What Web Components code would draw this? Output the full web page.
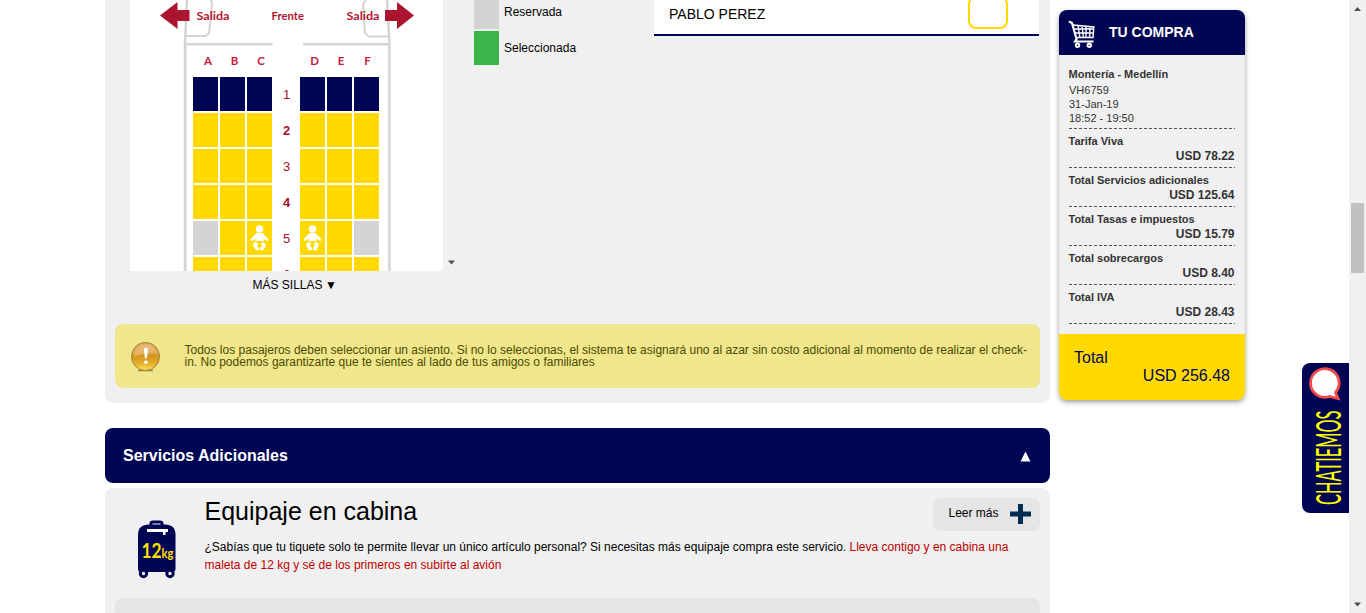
<!DOCTYPE html>
<html lang="es">
<head>
<meta charset="utf-8">
<title>Selección de sillas</title>
<style>
html,body{margin:0;height:613px;overflow:hidden;background:#fff}
body{font:12px "Liberation Sans",Arial,sans-serif;color:#000}
</style>
</head>
<body>
<booking-page></booking-page>
<script>
const define = (name, html, setup) => customElements.define(name, class extends HTMLElement {
  constructor() { super(); this.attachShadow({mode: 'open'}); }
  connectedCallback() {
    const t = document.createElement('template');
    t.innerHTML = typeof html === 'function' ? html(this) : html;
    this.shadowRoot.replaceChildren(t.content.cloneNode(true));
    if (setup) setup(this);
  }
});

define('baby-icon', `<style>:host{display:block;width:19px;height:26px}svg{display:block}</style>
<svg width="19" height="26" viewBox="0 0 19 26" fill="#fff"><circle cx="9.500" cy="3.900" r="3.700"/>
<path d="M6.500 8H12.500L18 13.700Q18.900 15.200 17.400 15.900L15.800 15.600L13.600 13.600V16H5.400V13.600L3.200 15.600L1.600 15.900Q.1 15.200 1 13.700Z"/>
<path d="M5.600 16.800L8.600 19L7 20.700L9 23Q9.500 25.400 7.400 25.600Q5.500 25.400 4.800 23.600L3 20.600Q2.900 18 5.600 16.800ZM13.400 16.800L10.400 19L12 20.700L10 23Q9.500 25.400 11.600 25.600Q13.500 25.400 14.200 23.600L16 20.600Q16.100 18 13.400 16.800Z"/></svg>`);

define('seat-cell', `<style>:host{display:flex;box-sizing:border-box;height:34px;background:#ffd900;padding:4px 0 0 3px;overflow:hidden}
:host([kind=n]){background:#000653}:host([kind=g]){background:#d4d4d4}</style><slot></slot>`);

define('seat-row', h => {
  const c = k => `<seat-cell kind="${k}">${k === 'b' ? '<baby-icon></baby-icon>' : ''}</seat-cell>`;
  const s = [...h.getAttribute('seats')];
  return `<style>:host{display:grid;grid-template-columns:25px 25px 25px 24px 25px 25px 25px;column-gap:2px;height:34px}
  b{font:13px/35px "Liberation Sans",sans-serif;color:#a50f2d;text-align:center;padding-left:1px}
  :host([strong]) b{font-weight:bold}</style>${s.slice(0,3).map(c).join('')}<b>${h.getAttribute('num')}</b>${s.slice(3).map(c).join('')}`;
});

define('seat-map', `<style>
:host{display:block;width:313px;height:271px;background:#fff;overflow:hidden;position:relative}
svg{position:absolute;left:0;top:0}
.rows{display:grid;row-gap:2px;padding:77px 0 0 63px}
</style>
<svg width="313" height="271" viewBox="0 0 313 271" font-family="Lato,sans-serif" font-weight="700" font-size="11.500" fill="#b3152f">
<g fill="none" stroke="#d3d3d3">
<path d="M57 0L55 44V271" stroke-width="2.500"/><path d="M257 0L259.500 44V271" stroke-width="2.500"/>
<path d="M56.500 46V271M258 46V271" stroke="#e9e9e9" stroke-width="1"/>
<path d="M56 44.300H142.500M173 44.300H260" stroke-width="2.500"/>
<path d="M81 0L82 4L79 33L75.500 36H57M236 0L233 4L235 33L239 36.500H258" stroke-width="2"/></g>
<path d="M30 15.500L47.500 2V10H59.500V21H47.500V29ZM284 15.500L267 2V10H255V21H267V29Z" fill="#ab152f"/>
<text x="66.500" y="19.500" textLength="33" lengthAdjust="spacingAndGlyphs">Salida</text><text x="141.500" y="19.500" textLength="32.500" lengthAdjust="spacingAndGlyphs">Frente</text><text x="216.500" y="19.500" textLength="33" lengthAdjust="spacingAndGlyphs">Salida</text>
<g text-anchor="middle" fill="#c51c3b"><text x="78" y="65">A</text><text x="104.500" y="65">B</text><text x="131" y="65">C</text><text x="184.500" y="65">D</text><text x="211" y="65">E</text><text x="237.500" y="65">F</text></g>
</svg>
<div class="rows">
<seat-row num="1" seats="nnnnnn"></seat-row><seat-row num="2" strong seats="yyyyyy"></seat-row><seat-row num="3" seats="yyyyyy"></seat-row><seat-row num="4" strong seats="yyyyyy"></seat-row><seat-row num="5" seats="gybbyg"></seat-row><seat-row num="6" seats="yyyyyy"></seat-row></div>`);

define('legend-item', `<style>:host{display:flex;gap:5px;height:34px;line-height:34px}
i{width:25px;background:var(--swatch)}</style><i></i><span><slot></slot></span>`);

define('passenger-row', `<style>:host{display:flex;justify-content:space-between;box-sizing:border-box;width:385px;height:36px;background:#fff;border-bottom:2px solid #000653;padding:0 31px 0 15px;font-size:14px;line-height:29px}
i{box-sizing:border-box;width:40px;height:33px;margin-top:-4px;border:2px solid #ffd900;border-radius:8px}</style><span><slot></slot></span><i></i>`);

define('alert-box', `<style>:host{display:flex;box-sizing:border-box;height:64px;margin:0 10px;border-radius:8px;background:#f0e68c;color:#4b4b00;padding:17px 0 0 15px;line-height:12px}
svg{display:block;margin-right:23.500px}p{margin:3px 0 0;white-space:nowrap}</style>
<svg width="31" height="31" viewBox="0 0 31 31"><defs><linearGradient id="g" x2="0" y2="1"><stop offset="0" stop-color="#e3ad64"/><stop offset=".42" stop-color="#dda23e"/><stop offset=".46" stop-color="#d4931c"/><stop offset=".75" stop-color="#e3ae2c"/><stop offset="1" stop-color="#ffe252"/></linearGradient></defs>
<path d="M8 29.500H23" stroke="#8d8344" stroke-width="1.500"/><circle cx="15.500" cy="15.500" r="14" fill="url(#g)" stroke="#a28436"/><path d="M4 12A12 12 0 0 1 27 12Q15 11 4 16Z" fill="#fff" opacity=".18"/><path d="M15.900 6.500C18.700 6.500 18 10.500 16.700 17.500H15.100C13.800 10.500 13.100 6.500 15.900 6.500Z" fill="#fff"/><ellipse cx="15.900" cy="21.300" rx="2" ry="1.800" fill="#fff"/></svg><p><slot></slot></p>`);

define('seat-section', `<style>
:host{display:flex;flex-direction:column;height:403px;background:#f0f0f0;border-radius:0 0 8px 8px}
.top{display:flex;height:271px;padding-left:25px}
.arrow{align-self:flex-end;margin:0 0 6px 4px;width:9px;height:5px}
.legend{display:grid;row-gap:2px;align-content:start;width:180px;margin:-5px 0 0 18px}
.more{height:26px;line-height:28px;padding-left:147.500px}
.more span{margin-left:-1px}
alert-box{margin-top:27px}
</style>
<div class="top"><seat-map></seat-map><svg class="arrow" viewBox="0 0 9 5"><path d="M1 .5H8L4.500 4.500Z" fill="#4f4f4f"/></svg>
<div class="legend"><legend-item style="--swatch:#d4d4d4">Reservada</legend-item><legend-item style="--swatch:#3ab54a">Seleccionada</legend-item></div>
<passenger-row>PABLO PEREZ</passenger-row></div>
<div class="more">MÁS SILLAS <span>▼</span></div>
<alert-box>Todos los pasajeros deben seleccionar un asiento. Si no lo seleccionas, el sistema te asignará uno al azar sin costo adicional al momento de realizar el check-<br>in. No podemos garantizarte que te sientes al lado de tus amigos o familiares</alert-box>`);

define('section-header', `<style>:host{display:flex;justify-content:space-between;align-items:center;box-sizing:border-box;height:55px;background:#000653;color:#fff;border-radius:8px;padding:0 19px 0 18px;font:bold 16px "Liberation Sans",sans-serif}
svg{display:block;margin-top:2px}</style><span><slot></slot></span><svg width="11" height="11" viewBox="0 0 11 11"><path d="M5.500 .5L10.500 10.500H.5Z" fill="#fff"/></svg>`);

define('luggage-icon', `<style>:host{display:block;width:40px;height:60px}svg{display:block}</style>
<svg width="40" height="60" viewBox="0 0 40 60"><path d="M14 5V3.500Q14 2 16 2H23Q25 2 25 3.500V5" fill="none" stroke="#000653" stroke-width="3"/><path d="M1 15Q1 4.500 12 4.500H28Q38.500 4.500 38.500 15V49Q38.500 52 35.500 52H4Q1 52 1 49Z" fill="#000653"/>
<circle cx="6.500" cy="53.500" r="3.200" fill="#fff" stroke="#000653" stroke-width="3"/><circle cx="33" cy="53.500" r="3.200" fill="#fff" stroke="#000653" stroke-width="3"/><path d="M10 9H31V12H28.500V15H26V12H10Z" fill="#fff"/>
<text x="4.500" y="37.500" font-family="Lato,sans-serif" font-weight="700" fill="#ffe000" font-size="20" textLength="32" lengthAdjust="spacingAndGlyphs">12<tspan font-size="13">kg</tspan></text></svg>`);

define('more-button', `<style>:host{display:flex;box-sizing:border-box;width:107px;height:33px;background:#e5e5e5;border-radius:8px;padding:0 9px 0 15.500px;justify-content:space-between;line-height:30px}
svg{margin-top:6px}</style><span><slot></slot></span><svg width="21" height="20" viewBox="0 0 21 20"><path d="M8 0H13V7.500H21V12.500H13V20H8V12.500H0V7.500H8Z" fill="#002c54"/></svg>`);

define('service-card', `<style>:host{display:block;height:125px;background:#f0f0f0;border-radius:8px 8px 0 0;overflow:hidden}
.row{display:flex;height:110px}luggage-icon{margin:32px 28px 0 32px}
.body{width:728px}h2{font:25px/30px "Liberation Sans",sans-serif;margin:8px 0 12px}
p{margin:0;line-height:18px;white-space:nowrap}h2,p{text-indent:0;position:static;margin-left:-.500px}em{font-style:normal;color:#c00000}
more-button{margin-top:10px}
.next{height:30px;margin:0 10px;border-radius:8px;background:#e5e5e5}</style>
<div class="row"><luggage-icon></luggage-icon><div class="body"><h2>Equipaje en cabina</h2><p>¿Sabías que tu tiquete solo te permite llevar un único artículo personal? Si necesitas más equipaje compra este servicio. <em>Lleva contigo y en cabina una<br>maleta de 12 kg y sé de los primeros en subirte al avión</em></p></div><more-button>Leer más</more-button></div><div class="next"></div>`);

define('price-line', `<style>:host{display:block;box-sizing:border-box;height:39px;font-weight:bold;padding-top:5px;background:repeating-linear-gradient(90deg,#555 0 3px,transparent 3px 5px) 0 100%/100% 1px no-repeat}
div{font-size:11px;line-height:15px;margin-left:-.500px}b{display:block;text-align:right;font-size:12px;line-height:14px;margin-right:.500px}</style><div><slot></slot></div><b><slot name="amount"></slot></b>`);

define('purchase-summary', `<style>
:host{display:block;width:186px;height:390px;margin-top:10px;border-radius:8px;background:#f0f0f0;overflow:hidden;box-shadow:0 2px 5px rgba(0,0,0,.4);color:#333}
header{display:flex;height:45px;background:#000653;color:#fff;font:bold 14px/45px "Liberation Sans",sans-serif}
header svg{margin:10px 13px 0 9px}
.flight{box-sizing:border-box;height:74px;margin:0 10px 0 10px;padding-top:12px;font-size:11px;line-height:14px;background:repeating-linear-gradient(90deg,#555 0 3px,transparent 3px 5px) 0 100%/100% 1px no-repeat;text-indent:-.500px}
.flight b{display:block;line-height:15px;padding-bottom:1px}.lines{padding:0 10px;height:205px}
footer{box-sizing:border-box;height:66px;background:#ffd900;color:#000653;padding:15px 15px;font-size:16px;line-height:18px}footer div+div{text-align:right}
</style>
<header><svg width="28" height="30" viewBox="0 0 28 30" fill="none" stroke="#fff"><path d="M1 1.500L4 3L8.500 19L7 21.500H25.500" stroke-width="2.200"/><path d="M5 5L25.800 7L25 17.500H8.500M6 9H26M7 13H25.500M10 5.500L12 18M14 6L15.500 18M18 7V18M22 7L21.500 18" stroke-width="1.400"/><circle cx="9.500" cy="25.300" r="1.700" stroke-width="2"/><circle cx="21.300" cy="25.300" r="1.700" stroke-width="2"/></svg><span>TU COMPRA</span></header>
<div class="flight"><b>Montería - Medellín</b>VH6759<br>31-Jan-19<br>18:52 - 19:50</div>
<div class="lines">
<price-line>Tarifa Viva<span slot="amount">USD 78.22</span></price-line>
<price-line>Total Servicios adicionales<span slot="amount">USD 125.64</span></price-line>
<price-line>Total Tasas e impuestos<span slot="amount">USD 15.79</span></price-line>
<price-line>Total sobrecargos<span slot="amount">USD 8.40</span></price-line>
<price-line>Total IVA<span slot="amount">USD 28.43</span></price-line></div>
<footer><div>Total</div><div>USD 256.48</div></footer>`);

define('chat-tab', `<style>:host{display:block;width:47px;height:150px;margin:363px 0 0 57px;background:#000653;border-radius:8px 0 0 8px}svg{display:block}</style>
<svg width="47" height="150" viewBox="0 0 47 150"><path d="M33.500 29.500L36 35.500L27.500 33.500A14.300 14.300 0 1 1 33.500 29.500Z" fill="#fff" stroke="#f24a4a" stroke-width="2.800"/>
<text transform="translate(39 142) rotate(-90)" font-family="Lato,sans-serif" font-size="35.500" textLength="94.500" lengthAdjust="spacingAndGlyphs" fill="#ffff00">CHATIEMOS</text></svg>`);

define('page-scrollbar', `<style>:host{display:flex;flex-direction:column;justify-content:space-between;width:17px;height:613px;background:#f0f0f0}
svg{display:block}i{width:13px;height:70px;margin:186px 0 auto 2px;background:#c1c1c1}</style>
<svg width="17" height="17"><path d="M5 11L8.500 7L12 11Z" fill="#505050"/></svg><i></i><svg width="17" height="17"><path d="M5 6.500H12L8.500 10.500Z" fill="#505050"/></svg>`);

define('booking-page', `<style>:host{display:flex;width:1366px;height:613px;overflow:hidden}
main{width:945px;margin:0 9px 0 105px;flex:none}section-header{margin:25px 0 5px}</style>
<main><seat-section></seat-section><section-header>Servicios Adicionales</section-header><service-card></service-card></main>
<purchase-summary></purchase-summary><chat-tab></chat-tab><page-scrollbar></page-scrollbar>`);
</script>
</body>
</html>
